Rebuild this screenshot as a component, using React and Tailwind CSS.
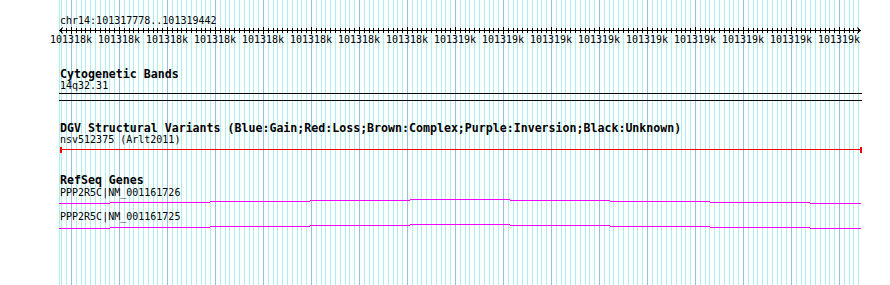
const ticks = Array.from({ length: 167 }, (_, k) => ({
  x: Math.round(61.4 + 4.8 * k),
  major: k % 10 === 2,
}))

const rulerLabels = [
  ...Array(8).fill('101318k'),
  ...Array(9).fill('101319k'),
]

// intron "hat" clipped to the view: [x1, x2, row]
const hat = [
  [59, 110, 4],
  [110, 210, 3],
  [210, 310, 2],
  [310, 410, 1],
  [410, 510, 0],
  [510, 610, 1],
  [610, 710, 2],
  [710, 810, 3],
  [810, 861, 4],
]

const mono = "font-['DejaVu_Sans_Mono',monospace]"

function TrackTitle({ children }) {
  return <div className="pl-[60px] text-[11.6px] leading-[12px] font-bold text-black whitespace-nowrap">{children}</div>
}

function Label({ children }) {
  return <div className="pl-[60px] text-[10px] leading-[12px] text-black whitespace-nowrap">{children}</div>
}

function GeneLine({ offset }) {
  return (
    <svg width="890" height="6" className="block" shapeRendering="crispEdges">
      {hat.map(([a, b, y]) => (
        <line key={a} x1={a} x2={b} y1={y + offset + 0.5} y2={y + offset + 0.5} stroke="#ff00ff" strokeWidth="1" />
      ))}
    </svg>
  )
}

export default function App() {
  return (
    <div className={`relative w-[890px] h-[285px] overflow-hidden bg-white ${mono}`}>
      {/* grid */}
      <svg width="890" height="285" className="absolute inset-0" shapeRendering="crispEdges">
        <line x1="59.5" x2="59.5" y1="0" y2="285" stroke="#afeeee" />
        {ticks.map((t) => (
          <line key={t.x} x1={t.x + 0.5} x2={t.x + 0.5} y1="0" y2="285" stroke={t.major ? '#93bfe8' : '#afeeee'} />
        ))}
      </svg>

      <div className="relative pt-[15px]">
        {/* ruler */}
        <Label>chr14:101317778..101319442</Label>
        <svg width="890" height="7" className="block" shapeRendering="crispEdges">
          <line x1="59" x2="861" y1="3.5" y2="3.5" stroke="#000" />
          {ticks.map((t) => (
            <line key={t.x} x1={t.x + 0.5} x2={t.x + 0.5} y1={t.major ? 0 : 1} y2={t.major ? 7 : 6} stroke="#000" />
          ))}
          <polyline points="63,0.5 59.5,3.5 63,6.5" fill="none" stroke="#000" shapeRendering="auto" />
          <polyline points="857,0.5 860.5,3.5 857,6.5" fill="none" stroke="#000" shapeRendering="auto" />
        </svg>
        <div className="flex pl-[47px] text-[10px] leading-[12px] text-black">
          {rulerLabels.map((l, i) => (
            <div key={i} className="w-[48px] shrink-0 text-center">{l}</div>
          ))}
        </div>

        {/* cytogenetic bands */}
        <div className="mt-[22px]">
          <TrackTitle>Cytogenetic Bands</TrackTitle>
          <Label>14q32.31</Label>
          <svg width="890" height="10" className="block" shapeRendering="crispEdges">
            <line x1="59" x2="862" y1="1.5" y2="1.5" stroke="#000" />
            <line x1="59" x2="862" y1="8.5" y2="8.5" stroke="#000" />
          </svg>
        </div>

        {/* DGV */}
        <div className="mt-[20px]">
          <TrackTitle>DGV Structural Variants (Blue:Gain;Red:Loss;Brown:Complex;Purple:Inversion;Black:Unknown)</TrackTitle>
          <Label>nsv512375 (Arlt2011)</Label>
          <svg width="890" height="8" className="block" shapeRendering="crispEdges">
            <line x1="60" x2="862" y1="3.5" y2="3.5" stroke="#ff0000" />
            <rect x="60" y="1" width="2" height="6" fill="#ff0000" />
            <rect x="860" y="1" width="2" height="6" fill="#ff0000" />
          </svg>
        </div>

        {/* RefSeq */}
        <div className="mt-[20px]">
          <TrackTitle>RefSeq Genes</TrackTitle>
          <div className="mt-[1px]">
            <Label>PPP2R5C|NM_001161726</Label>
          </div>
          <GeneLine offset={0} />
          <div className="mt-[6px]">
            <Label>PPP2R5C|NM_001161725</Label>
          </div>
          <GeneLine offset={1} />
        </div>
      </div>
    </div>
  )
}
